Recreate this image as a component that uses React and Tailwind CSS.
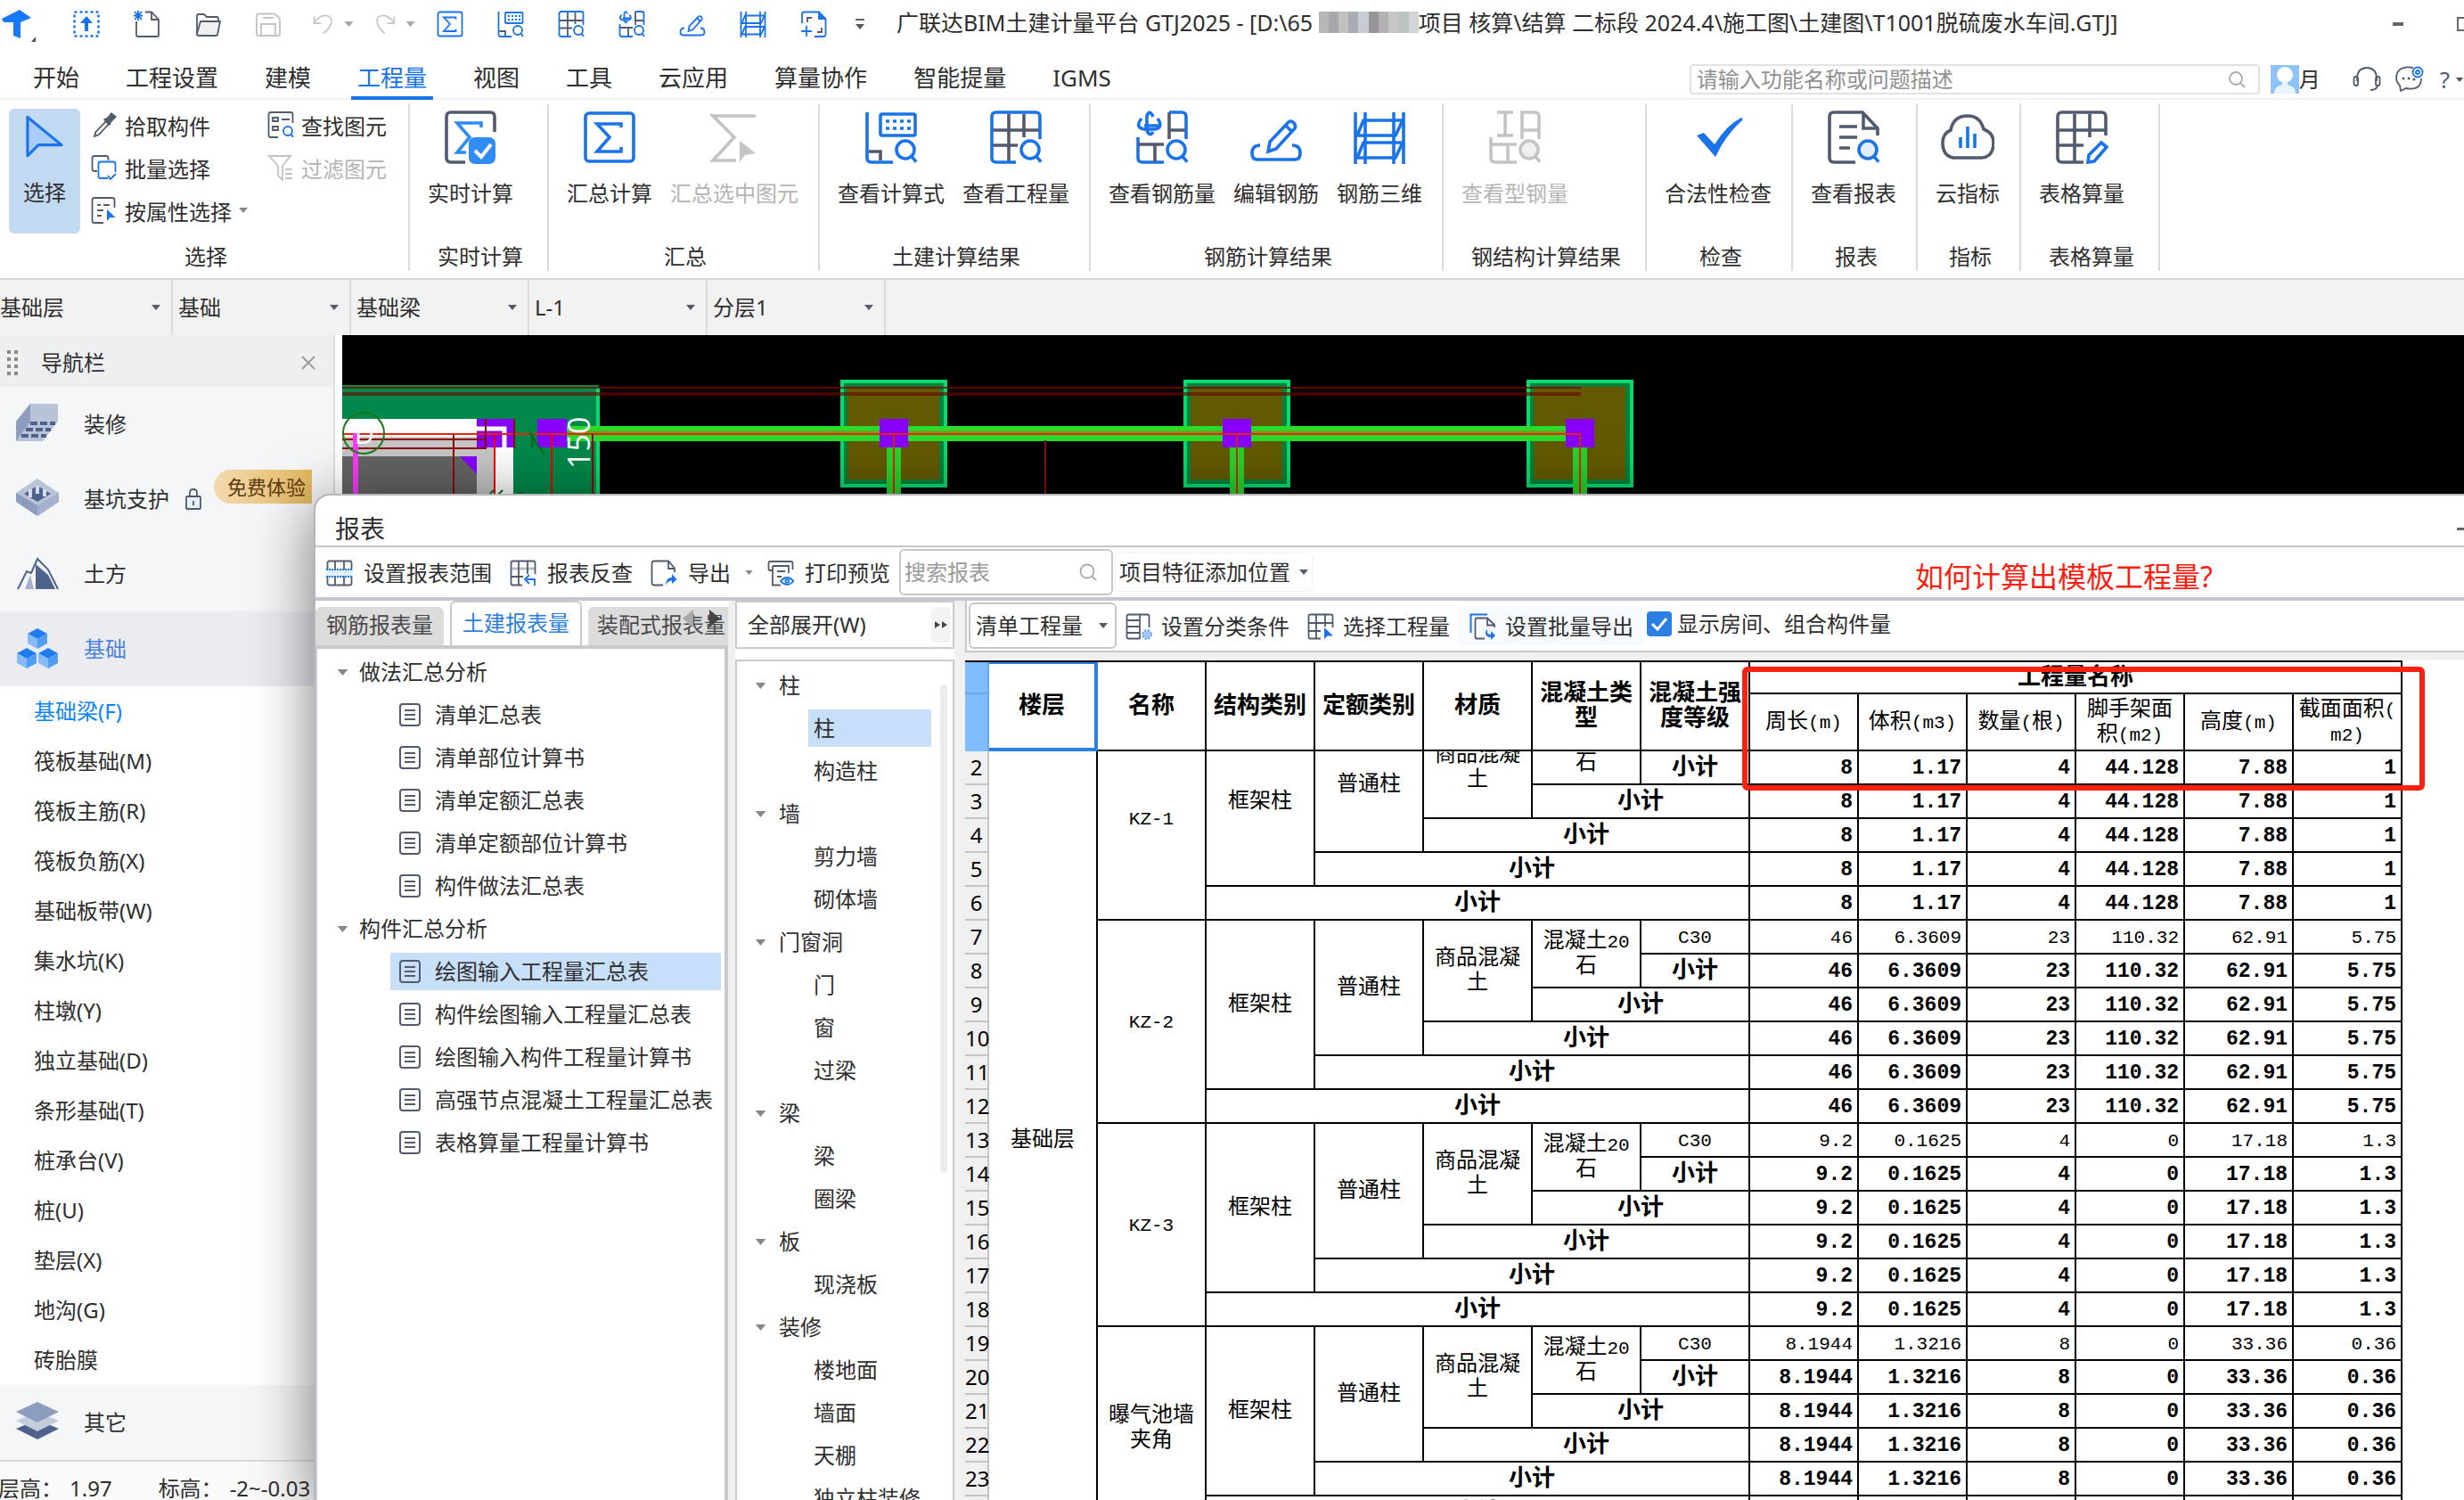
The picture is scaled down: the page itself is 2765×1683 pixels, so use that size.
import React from "react";

const B = "#1a73e8";
const D = "#525a6e";
const G = "#c4c4c4";

/* ---------- icons ---------- */

function Svg({ children, box = "0 0 30 30", className = "size-[30px]" }) {
  return (
    <svg viewBox={box} fill="none" strokeWidth="1.8" className={`shrink-0 ${className}`} aria-hidden="true">
      {children}
    </svg>
  );
}

function Lens({ color = B, x = 23, y = 22, fill = "none" }) {
  return (
    <g stroke={color}>
      <circle cx={x} cy={y} r="5" fill={fill} />
      <path d={`M${x + 3.5} ${y + 3.8}l2.6 3`} />
    </g>
  );
}

function Caret({ className = "h-[6px] w-[10px] text-[#555b66]" }) {
  return (
    <svg viewBox="0 0 10 6" className={`shrink-0 ${className}`} aria-hidden="true">
      <path d="M0 0h10L5 6z" fill="currentColor" />
    </svg>
  );
}

const icons = {
  sigma: (
    <g stroke={B}>
      <rect x="1.5" y="1.5" width="27" height="27" rx="2" />
      <path d="M21.500 9.500V7.500H8l7 7.500-7 8h13.500v-2.500" />
    </g>
  ),
  sigmaGray: (
    <g stroke={G}>
      <path d="M27 3H3l12 12L3 28h13" />
      <path d="M18 17v12l3-4 6-1z" fill={G} stroke="none" />
    </g>
  ),
  realtime: (
    <g>
      <path d="M12 29H4q-2.500 0-2.500-2.500V3.500Q1.500 1 4 1h22q2.500 0 2.500 2.500V12" stroke={D} />
      <path d="M21 9.500V7H7.500l7 8-7 8.500h5" stroke="#2f8cf5" />
      <rect x="14" y="15" width="15" height="15" rx="3.500" fill="#2f8cf5" />
      <path d="M17.500 22.500l3.500 3.500 5.500-7" stroke="#fff" strokeWidth="2" />
    </g>
  ),
  formula: (
    <g>
      <path d="M1.500 1v25.500q0 2.500 2.500 2.500h12" stroke={B} />
      <path d="M2.500 23h6.500v5" stroke={D} />
      <rect x="9" y="2" width="19.500" height="12" rx="1" stroke={B} />
      <path d="M12 6h14M12 10h14" stroke={B} strokeDasharray="2 2" />
      <Lens />
    </g>
  ),
  gridLens: (
    <g>
      <path d="M11 2v27M19.500 2v13M2 11h26M2 19.500h14" stroke={D} />
      <path d="M15 29H4q-2.500 0-2.500-2.500V3.500Q1.500 1 4 1h22q2.500 0 2.500 2.500V16" stroke={B} />
      <Lens />
    </g>
  ),
  rebar: (
    <g>
      <path d="M3.500 4.500q-4 5 1.500 6h6q5-1 1.500-6" stroke={B} />
      <path d="M5 8.500h8M10 3.500Q8 -1 6.500 3v8q1.500 4 3.500 1" stroke={B} />
      <path d="M19 1v15M19 11h9" stroke={D} />
      <path d="M19 1h7q2.500 0 2.500 2.500V16M1.500 15v11.500q0 2.500 2.500 2.500h12" stroke={B} />
      <path d="M2 19h14M11 19v10" stroke={D} />
      <Lens />
    </g>
  ),
  steel: (
    <g stroke={G}>
      <path d="M5 1h9M9.500 1v13M5 14h9M19 16V1h7q2.500 0 2.500 2.500V16M19 11h9M1.500 15v11.500q0 2.500 2.500 2.500h12M2 19h14M11 19v10" />
      <Lens color={G} fill="#f0f0f0" />
    </g>
  ),
  pen: (
    <g stroke={B}>
      <path d="M6 19.500q-4.500 0-4.500 4.500 0 3.500 3 3.500h21q3 0 3-3.500 0-4.500-4.500-4.500" />
      <path d="M10.500 23l1-5.500L22 6.500q1.500-1 3 .5 1.300 1.500.5 3L15 21.500z" />
      <path d="M20.500 8.500l3.500 3.500" />
    </g>
  ),
  ladder: (
    <g stroke={B}>
      <path d="M1.500 1v29M7 1v29M23 1v29M28.500 1v29" />
      <path d="M6 5.500h22L24 14H2.500zM6 18h22l-4 8.500H2.500z" />
    </g>
  ),
  frame: (
    <g>
      <path d="M2 14V4q0-2.500 2.500-2.500H21L28.500 9v17.500q0 2.500-2.500 2.500H16" stroke={B} />
      <path d="M21 2v7h7" fill={B} stroke={B} />
      <path d="M8 13V8h5M24 19v5h-5" stroke={D} />
      <path d="M1 23h12M7 17v12" stroke={B} />
    </g>
  ),
  upload: (
    <g>
      <rect x="1.500" y="1.500" width="27" height="27" stroke={B} strokeWidth="2.500" strokeDasharray="3 3" />
      <path d="M15 6l7 8h-5v9h-4v-9H8z" fill={B} />
    </g>
  ),
  newDoc: (
    <g>
      <path d="M3 12v15q0 2 2 2h21q2 0 2-2V10l-8-8.500h-7" stroke={D} />
      <path d="M20 2v8h8" stroke={D} />
      <path d="M1 1l8 9M9 1L1 10M5 0v11M0 5.500h10" stroke={B} />
    </g>
  ),
  folder: (
    <g stroke={D}>
      <path d="M3 27V6q0-2 2-2h6l3 3h11q2 0 2 2v3" />
      <path d="M7 12h22l-3 15q0 1-2 1H5q-2 0-2-2z" fill="#f0f0f0" />
    </g>
  ),
  save: (
    <g stroke={G}>
      <path d="M2 6q0-2.500 2.500-2.500H22l6 5V26q0 2-2 2H4q-2 0-2-2z" />
      <path d="M9 8h12M7 28V15h16v13" />
    </g>
  ),
  undo: (
    <g stroke={G}>
      <path d="M3 5v9h9M3 13Q11 3 19 4q8 2 6 10-3 8-10 13" />
    </g>
  ),
  redo: (
    <g stroke={G}>
      <path d="M27 5v9h-9M27 13Q19 3 11 4q-8 2-6 10 3 8 10 13" />
    </g>
  ),
  check: <path d="M3 14l4-1.500 6 6.500Q20 8 28 4q1 0 .5 1.500Q19 14 13.500 26z" fill={B} />,
  report: (
    <g>
      <path d="M16 29H4q-2.500 0-2.500-2.500V3.500Q1.500 1 4 1h16l8.500 9v4" stroke={D} />
      <path d="M20.500 2v8h7M7 9h10M7 15h10M7 21h6" stroke={D} />
      <Lens fill="#e2eeff" />
    </g>
  ),
  cloud: (
    <g>
      <path d="M7 26.500q-6-1-6-8.500 0-5 4.500-7 1.500-8 9.500-8 7 0 9 7.500 5.500 2 5.500 7.500 0 8-6.500 8.500z" stroke={D} />
      <path d="M11 15v6M15 9v12M19 13v8" stroke={B} />
    </g>
  ),
  gridPen: (
    <g>
      <path d="M16 29H4q-2.500 0-2.500-2.500V3.500Q1.500 1 4 1h22q2.500 0 2.500 2.500V14M11 2v27M19.500 2v13M2 11h26M2 19.500h14" stroke={D} />
      <path d="M18.500 29l.5-4 7-7 3 2.500-7 8z" stroke={B} />
    </g>
  ),
  cursor: <path d="M4 2v25l7-7h15z" fill="#a9cdf8" stroke={B} strokeLinejoin="round" />,
  dropper: (
    <g>
      <path d="M4 28l1.500-5L17 11l3 3L9 26z" stroke={D} />
      <path d="M15 8l3-1 5-6 6 5-6 6-1 3-2 1-6-7z" fill={D} />
    </g>
  ),
  copySel: (
    <g>
      <path d="M7 19H4q-2.500 0-2.500-2.500v-12Q1.500 2 4 2h13q2.500 0 2.500 2.500V7" stroke={D} />
      <path d="M19 27h-8q-2.500 0-2.500-2.500V11q0-2.500 2.500-2.500h14q2.500 0 2.500 2.500v9M19 24l3 4 6-6" stroke={B} />
    </g>
  ),
  attrSel: (
    <g>
      <path d="M14 29H4q-2.500 0-2.500-2.500V3.500Q1.500 1 4 1h20q2.500 0 2.500 2.500V12M7 9h4M14 9h7M7 15h7M7 21h5" stroke={D} />
      <path d="M18 14v13l3.500-4 6 0z" fill={B} />
    </g>
  ),
  findEl: (
    <g>
      <path d="M12 29H4q-2.500 0-2.500-2.500V3.500Q1.500 1 4 1h22q2.500 0 2.500 2.500V13M6 7h6v4H6zM6 17h6v4H6zM16 9h9" stroke={D} />
      <Lens />
    </g>
  ),
  filter: (
    <path d="M2 2h24l-9 11v16l-5-5V13zM20 17h8M20 22h8M20 27h8" stroke={G} />
  ),
  range: (
    <g>
      <rect x="1.500" y="1.500" width="27" height="27" rx="2" stroke={D} />
      <path d="M10 2v27M20 2v27" stroke={D} />
      <path d="M0 11h30v8H0z" fill="#e2efff" />
      <path d="M0 11h30M0 19h30" stroke={B} strokeDasharray="2 1" />
    </g>
  ),
  trace: (
    <g>
      <path d="M1 10h28" stroke="#b8bcc4" strokeWidth="3" />
      <path d="M14 28.500H3.500q-2 0-2-2v-23q0-2 2-2h23q2 0 2 2V16M10 2v27M20 2v14M2 19h13" stroke={D} />
      <path d="M28 29v-7h-9M22 17l-5 5 5 5" stroke={B} />
    </g>
  ),
  exportDoc: (
    <g>
      <path d="M14 28.500H4q-2.500 0-2.500-2.500V4q0-2.500 2.500-2.500h16l7 8V14M20 2v8h7" stroke={D} />
      <path d="M17 29q0-9 7-9v-4l5.500 6-5.500 5v-3.500q-5 0-7 5.500z" fill={B} />
    </g>
  ),
  print: (
    <g>
      <path d="M6 12H3.500q-2 0-2-2v-6q0-2 2-2h23q2 0 2 2v7M6 7h18v8M6 7v21.500h9M11 13h9M11 19h5" stroke={D} />
      <path d="M15 24q7-8 14.500 0-7.500 8-14.500 0z" fill="#e2efff" stroke={B} />
      <circle cx="22.300" cy="24" r="1.800" stroke={B} />
    </g>
  ),
  classify: (
    <g>
      <path d="M16 28.500H3.500q-2 0-2-2v-23q0-2 2-2h21q2 0 2 2V16M16 2v27M2 8h14M2 15h14M2 22h14" stroke={D} />
      <circle cx="24" cy="24" r="5" fill="#a5c8f8" />
      <circle cx="24" cy="24" r="5" stroke="#5f9cf0" strokeDasharray="2 2" />
    </g>
  ),
  gridCursor: (
    <g>
      <path d="M15 28.500H3.500q-2 0-2-2v-23q0-2 2-2h23q2 0 2 2V16M10 2v27M20 2v13M2 11h27M2 20h13" stroke={D} />
      <path d="M19 16v13l3.500-3.500H29z" fill={B} />
    </g>
  ),
  batch: (
    <g>
      <path d="M1.500 22V1.500H20" stroke={B} strokeWidth="2" />
      <path d="M17 28.500H8.500q-2 0-2-2v-19q0-2 2-2H20l8 7.500v3M20 6v7.500h8" stroke={D} />
      <path d="M20 18v3q0 3 4 3v-4l5 5-5 5v-3q-6 0-6-6z" fill={B} />
    </g>
  ),
};

function Icon({ name, className }) {
  return <Svg className={className}>{icons[name]}</Svg>;
}

/* ---------- shared controls ---------- */

function Pick({ label, value, className = "", arrow = "right-3" }) {
  return (
    <div className={`relative flex items-center ${className}`}>
      <select aria-label={label} defaultValue={value} className="size-full appearance-none bg-transparent pr-4 outline-none">
        <option>{value}</option>
      </select>
      <span className={`pointer-events-none absolute top-1/2 -translate-y-1/2 ${arrow}`}>
        <Caret />
      </span>
    </div>
  );
}

/* ---------- title bar ---------- */

const mosaic = ["bg-[#b9b6b6]", "bg-[#aaa7ac]", "bg-[#c3c0bf]", "bg-[#a9adb3]", "bg-[#c8cbd0]", "bg-[#9a959b]", "bg-[#b3b0b4]", "bg-[#c6c6c9]", "bg-[#bcc4c3]", "bg-[#d2d4d6]"];

function TitleBar() {
  const quick = ["sigma", "formula", "gridLens", "rebar", "pen", "ladder", "frame"];
  return (
    <header className="flex h-[54px] items-center">
      <svg viewBox="0 0 40 40" className="size-10 shrink-0" aria-hidden="true">
        <path d="M2 14L22 4l13 9-12 5v18l-8-3V18H4z" fill="#1677ff" />
        <path d="M40 34v6h-5z" fill="#555" />
      </svg>
      <div className="ml-[42px] flex items-center gap-[38px]">
        {["upload", "newDoc", "folder", "save"].map((n) => (
          <button key={n} type="button" aria-label={n}><Icon name={n} className="block size-[30px]" /></button>
        ))}
      </div>
      <div className="ml-[34px] flex items-center gap-[22px]">
        {["undo", "redo"].map((n) => (
          <button key={n} type="button" aria-label={n} className="flex items-center gap-[10px]">
            <Icon name={n} className="size-[26px]" />
            <Caret className="h-[6px] w-[11px] text-[#a8a8a8]" />
          </button>
        ))}
      </div>
      <div className="ml-6 flex items-center gap-[38px]">
        {quick.map((n) => (
          <button key={n} type="button" aria-label={n}><Icon name={n} className="block size-[30px]" /></button>
        ))}
      </div>
      <button type="button" aria-label="自定义" className="ml-8 flex flex-col items-center gap-1">
        <span className="h-[2px] w-[10px] bg-[#666]" />
        <Caret className="h-[6px] w-[10px] text-[#555]" />
      </button>
      <h1 className="ml-9 flex items-center pb-1 text-[25px] whitespace-pre">
        广联达BIM土建计量平台 GTJ2025 - [D:\65{" "}
        <span className="flex h-6 w-[112px]">
          {mosaic.map((c) => (
            <span key={c} className={`h-full flex-1 ${c}`} />
          ))}
        </span>
        项目 核算\结算 二标段 2024.4\施工图\土建图\T1001脱硫废水车间.GTJ]
      </h1>
      <div className="ml-auto flex items-center gap-[60px]">
        <button type="button" aria-label="最小化" className="h-1 w-3 bg-[#666]" />
        <button type="button" aria-label="最大化" className="-mr-1 h-4 w-3 border-2 border-r-0 border-[#666]" />
      </div>
    </header>
  );
}

/* ---------- menu tabs ---------- */

const menu = ["开始", "工程设置", "建模", "工程量", "视图", "工具", "云应用", "算量协作", "智能提量", "IGMS"];

function MenuBar() {
  return (
    <nav className="flex h-[58px] items-center border-b-2 border-[#f2f2f2] pl-[30px] text-[26px]">
      <div className="flex h-full gap-[38px]">
        {menu.map((m) => (
          <button
            key={m}
            type="button"
            className={m === "工程量" ? "-mb-[2px] border-b-4 border-[#1a73e8] px-[7px] pt-3 text-[#1a73e8]" : "px-[7px] pt-[10px]"}
          >
            {m}
          </button>
        ))}
      </div>
      <div className="ml-auto flex items-center pt-[14px]">
        <label className="flex h-[34px] w-[640px] items-center rounded-sm border-2 border-[#e2e2e2] px-[6px] text-[24px]">
          <input aria-label="搜索功能" placeholder="请输入功能名称或问题描述" className="min-w-0 flex-1 outline-none placeholder:text-[#909090]" />
          <Svg box="0 0 20 20" className="mr-2 size-[20px]">
            <circle cx="9" cy="9" r="7" stroke="#aaa" />
            <path d="M14 14l5 5" stroke="#aaa" />
          </Svg>
        </label>
        <svg viewBox="0 0 32 32" className="ml-3 size-8 shrink-0" aria-hidden="true">
          <path d="M0 0h32v32H0z" fill="#8fc2f8" />
          <circle cx="16" cy="11" r="9" fill="#fff" />
          <path d="M13 18h6v4q9 2 9 10H4q0-8 9-10z" fill="#eaf4ff" />
        </svg>
        <span className="text-[24px]">月</span>
        <button type="button" aria-label="客服" className="ml-9">
          <Svg box="0 0 32 32" className="block size-8">
            <path d="M5 18V14q1-11 11-11t11 11v4" stroke={D} />
            <rect x="1.500" y="13" width="4.500" height="10" rx="2" stroke={D} />
            <rect x="26" y="13" width="4.500" height="10" rx="2" stroke={D} />
            <path d="M28 23q-1 5-8 5" stroke={D} />
          </Svg>
        </button>
        <button type="button" aria-label="消息" className="ml-4">
          <Svg box="0 0 32 32" className="block size-8">
            <path d="M20 3Q2 0 1 14q0 5 4 9l1 6 6-3q17 3 17-11" stroke={D} />
            <circle cx="9" cy="15" r="1.500" fill={D} /><circle cx="15" cy="15" r="1.500" fill={D} /><circle cx="21" cy="16" r="1.500" fill={D} />
            <circle cx="25" cy="8" r="5.500" stroke={B} /><circle cx="25" cy="8" r="2" stroke={B} />
          </Svg>
        </button>
        <button type="button" aria-label="帮助" className="ml-[18px] flex items-center gap-[6px] text-[26px] text-[#525a6e]">
          ?<Caret className="h-[5px] w-[10px] text-[#555]" />
        </button>
      </div>
    </nav>
  );
}

/* ---------- ribbon ---------- */

const ribbon = [
  { label: "实时计算", width: "w-[156px]", items: [["realtime", "实时计算"]] },
  { label: "汇总", width: "w-[304px]", items: [["sigma", "汇总计算"], ["sigmaGray", "汇总选中图元", true]] },
  { label: "土建计算结果", width: "w-[304px]", items: [["formula", "查看计算式"], ["gridLens", "查看工程量"]] },
  { label: "钢筋计算结果", width: "w-[396px]", items: [["rebar", "查看钢筋量"], ["pen", "编辑钢筋"], ["ladder", "钢筋三维"]] },
  { label: "钢结构计算结果", width: "w-[228px]", items: [["steel", "查看型钢量", true]] },
  { label: "检查", width: "w-[164px]", items: [["check", "合法性检查"]] },
  { label: "报表", width: "w-[140px]", items: [["report", "查看报表"]] },
  { label: "指标", width: "w-[116px]", items: [["cloud", "云指标"]] },
  { label: "表格算量", width: "w-[156px]", items: [["gridPen", "表格算量"]] },
];

function SmallTool({ icon, label, off, caret }) {
  return (
    <button type="button" disabled={off} className={`flex h-12 items-center gap-2 ${off ? "text-[#b4b4b4]" : ""}`}>
      <Icon name={icon} className="size-[30px]" />
      <span className="pt-[3px]">{label}</span>
      {caret && <Caret className="h-[6px] w-[10px] text-[#888]" />}
    </button>
  );
}

function Ribbon() {
  return (
    <section className="flex h-[202px] border-b-2 border-[#d6d6d6] py-1">
      <div className="mb-1 flex w-[460px] flex-col border-r-2 border-[#dcdcdc]">
        <div className="flex flex-1 pl-[10px]">
          <button type="button" className="mt-[6px] flex h-[140px] w-20 flex-col items-center rounded-md bg-[#c2d9f2] pt-[6px]">
            <Icon name="cursor" className="size-[52px]" />
            <span className="mt-5 leading-8">选择</span>
          </button>
          <div className="ml-3">
            <SmallTool icon="dropper" label="拾取构件" />
            <SmallTool icon="copySel" label="批量选择" />
            <SmallTool icon="attrSel" label="按属性选择" caret />
          </div>
          <div className="ml-[22px]">
            <SmallTool icon="findEl" label="查找图元" />
            <SmallTool icon="filter" label="过滤图元" off />
          </div>
        </div>
        <div className="pl-1 text-center leading-8">选择</div>
      </div>
      {ribbon.map((g) => (
        <div key={g.label} className={`mb-1 flex flex-col border-r-2 border-[#dcdcdc] ${g.width}`}>
          <div className="flex flex-1 pl-[10px]">
            {g.items.map(([icon, label, off]) => (
              <button
                key={label}
                type="button"
                disabled={off}
                className={`flex flex-col items-center px-[10px] pt-2 whitespace-nowrap ${off ? "text-[#b4b4b4]" : ""}`}
              >
                <Icon name={icon} className="size-[60px]" />
                <span className="mt-[17px] leading-8">{label}</span>
              </button>
            ))}
          </div>
          <div className="pl-1 text-center leading-8">{g.label}</div>
        </div>
      ))}
    </section>
  );
}

function FilterStrip() {
  const list = [["楼层", "基础层", "w-[194px] pl-0"], ["类别", "基础", "w-[200px] pl-[6px]"], ["构件类型", "基础梁", "w-[200px] pl-[6px]"], ["构件", "L-1", "w-[200px] pl-[6px]"], ["分层", "分层1", "w-[200px] pl-[6px]"]];
  return (
    <div className="flex h-[62px] bg-[#f2f2f2]">
      {list.map(([l, v, w]) => (
        <Pick key={l} label={l} value={v} className={`border-r-2 border-[#dcdcdc] ${w}`} />
      ))}
    </div>
  );
}

/* ---------- navigation panel ---------- */

const navIcons = {
  deco: (
    <g>
      <path d="M0 20L16 0h31v20L30 42H0z" fill="#b9c3d8" />
      <path d="M0 20L16 0v20L0 42z" fill="#8d9dbf" />
      <path d="M16 22h28M11 29h28M6 36h28" stroke="#4e628c" strokeWidth="4" strokeDasharray="8 3" />
    </g>
  ),
  pit: (
    <g>
      <path d="M24 0l24 16v10L24 42 0 26V16z" fill="#b9c3d8" />
      <path d="M0 16l24 14v12L0 26z" fill="#8d9dbf" />
      <path d="M24 30l24-14v10L24 42z" fill="#a5b1cc" />
      <path d="M24 8l15 9-15 9-15-9z" fill="#4e628c" />
      <path d="M16 12v9M24 8v9M32 12v8" stroke="#d5dcea" strokeWidth="4" />
    </g>
  ),
  earth: (
    <g>
      <path d="M2 40L12 20l5 2L24 6l12 12 11 22" stroke="#4e628c" strokeWidth="2" />
      <path d="M10 40l6-16 4 16z" fill="#a5b1cc" />
      <path d="M22 40V12l14 12 8 16z" fill="#4e628c" />
    </g>
  ),
  base: (
    <g>
      {[[24, 0], [12, 22], [36, 22]].map(([x, y]) => (
        <g key={x}>
          <path d={`M${x} ${y}l11 6-11 6-11-6z`} fill="#1e7bf0" />
          <path d={`M${x - 11} ${y + 6}l11 6v11l-11-6z`} fill="#86baf8" />
          <path d={`M${x + 11} ${y + 6}l-11 6v11l11-6z`} fill="#4f9df5" />
        </g>
      ))}
    </g>
  ),
  other: (
    <g>
      <path d="M24 20l24 10-24 12L0 30z" fill="#4e628c" />
      <path d="M24 11l24 10-24 12L0 21z" fill="#c5cddd" />
      <path d="M24 0l24 11-24 12L0 11z" fill="#8d9dbf" />
    </g>
  ),
};

function NavItem({ icon, label, active, children }) {
  return (
    <button
      type="button"
      className={`flex h-[84px] w-full items-center pl-[18px] ${active ? "bg-[#ebecf0] text-[#4a7fe0]" : "bg-[#f5f6f8]"}`}
    >
      <Svg box="0 0 48 46" className="h-[46px] w-12">{navIcons[icon]}</Svg>
      <span className="ml-7">{label}</span>
      {children}
    </button>
  );
}

const baseItems = ["基础梁(F)", "筏板基础(M)", "筏板主筋(R)", "筏板负筋(X)", "基础板带(W)", "集水坑(K)", "柱墩(Y)", "独立基础(D)", "条形基础(T)", "桩承台(V)", "桩(U)", "垫层(X)", "地沟(G)", "砖胎膜"];

function NavPanel() {
  return (
    <aside className="flex w-[376px] shrink-0 flex-col border-r-2 border-[#dcdcdc]">
      <div className="flex h-[58px] items-center bg-[#eeeff1] pt-1 pr-5 pl-2">
        <span className="grid grid-cols-2 gap-1">
          {Array.from({ length: 8 }, (_, i) => (
            <span key={i} className="size-1 bg-[#8a8a8a]" />
          ))}
        </span>
        <h2 className="ml-[26px]">导航栏</h2>
        <button type="button" aria-label="关闭" className="ml-auto">
          <Svg box="0 0 16 16" className="block size-4"><path d="M1 1l14 14M15 1L1 15" stroke="#999" /></Svg>
        </button>
      </div>
      <NavItem icon="deco" label="装修" />
      <NavItem icon="pit" label="基坑支护">
        <Svg box="0 0 18 24" className="ml-[18px] h-6 w-[18px]">
          <rect x="1" y="9" width="16" height="14" rx="1" stroke={D} fill="#e6f0fb" />
          <path d="M5 9V5q0-4 4-4t4 4v4M9 14v5" stroke={D} />
        </Svg>
        <span className="mb-7 ml-[14px] flex h-[38px] w-[110px] items-center justify-center rounded-l-full bg-linear-to-r from-[#f3dbae] to-[#e3b85f] pl-2 text-[22px] text-[#5e3a0e]">
          免费体验
        </span>
      </NavItem>
      <NavItem icon="earth" label="土方" />
      <NavItem icon="base" label="基础" active />
      <ul className="bg-white">
        {baseItems.map((t, i) => (
          <li key={t}>
            <button type="button" className={`h-14 w-full pl-[38px] text-left ${i === 0 ? "text-[#0d84f5]" : ""}`}>{t}</button>
          </li>
        ))}
      </ul>
      <NavItem icon="other" label="其它" />
      <footer className="flex flex-1 overflow-hidden border-t-2 border-[#dcdcdc] bg-[#fafafa] leading-[60px] whitespace-nowrap">
        <span className="-ml-[2px]">层高：</span>
        <span className="ml-2">1.97</span>
        <span className="ml-[52px]">标高：</span>
        <span className="ml-2">-2~-0.03</span>
      </footer>
    </aside>
  );
}

/* ---------- drawing canvas ---------- */

function Footing({ x }) {
  return (
    <g>
      <rect x={x + 1} y="428" width="116" height="117" fill="#00823e" stroke="#00dc6c" strokeWidth="4" />
      <rect x={x + 7} y="434" width="103" height="104" fill="#625a00" />
    </g>
  );
}

function Canvas() {
  const xs = [944, 1329, 1714];
  return (
    <div className="ml-2 min-w-0 flex-1 overflow-hidden bg-black">
      <svg viewBox="384 376 2381 180" className="h-[180px] w-[2381px] max-w-none">
        <rect x="384" y="432" width="288" height="124" fill="#00884a" />
        <path d="M671 436v120" stroke="#00e070" strokeWidth="4" />
        {xs.map((x) => <Footing key={x} x={x} />)}
        <path d="M384 435h1390" stroke="#7a0a00" strokeWidth="2" opacity=".8" />
        <path d="M384 442h1390" stroke="#6a0a00" strokeWidth="4" opacity=".65" />
        <rect x="384" y="470" width="192" height="86" fill="#fff" />
        <rect x="384" y="490" width="172" height="66" fill="#c6c6c6" />
        <rect x="384" y="512" width="151" height="44" fill="#646464" />
        <path d="M516 512h19v20z" fill="#8800ff" />
        <rect x="535" y="470" width="42" height="32" fill="#8800ff" />
        <path d="M535 481h31v75" stroke="#fff" strokeWidth="5" fill="none" />
        <rect x="603" y="470" width="33" height="32" fill="#8800ff" />
        <rect x="636" y="478" width="1150" height="17" fill="#2bdb2b" />
        <path d="M636 485h1150" stroke="#7a9a1a" strokeWidth="3" />
        {xs.map((x) => (
          <g key={x}>
            <rect x={x + 51} y="500" width="16" height="56" fill="#2bd02b" />
            <rect x={x + 43} y="470" width="32" height="32" fill="#8800ff" />
            <path d={`M${x + 59} 487v69`} stroke="#c03010" strokeWidth="2" />
          </g>
        ))}
        <path d="M384 487h1390" stroke="#f02010" strokeWidth="2" />
        <path d="M384 493h162M384 503h162M545 470v33M577 470v33M509 487v69M1173 494v62M665 487v69" stroke="#8a0a0a" strokeWidth="2" fill="none" />
        <path d="M555 487v69M619 487v69" stroke="#f00000" strokeWidth="2" />
        <path d="M399 486v70" stroke="#f53cf5" strokeWidth="6" />
        <circle cx="408" cy="486" r="23" fill="none" stroke="#1a7a1a" strokeWidth="2" />
        <path d="M593 484l18 26M597 502v-16M548 556l6-6M558 556l6-6M580 556l6-4" stroke="#0a6a1a" strokeWidth="2" fill="none" />
        <text x="398" y="498" fill="#fff" fontSize="30" fontFamily="Open Sans, sans-serif">D</text>
        <text transform="translate(662 526) rotate(-90)" fill="#fff" fontSize="34" fontFamily="Open Sans, sans-serif">150</text>
      </svg>
    </div>
  );
}

/* ---------- report dialog ---------- */

function TextTool({ icon, label, className = "gap-[10px]" }) {
  return (
    <button type="button" className={`flex items-center whitespace-nowrap ${className}`}>
      <Icon name={icon} className="size-[30px]" />
      {label}
    </button>
  );
}

function DialogToolbar() {
  return (
    <div className="flex h-[60px] items-center border-b-4 border-[#c4c7ce] pl-3">
      <TextTool icon="range" label="设置报表范围" className="gap-3 pt-[2px]" />
      <TextTool icon="trace" label="报表反查" className="ml-5 gap-3 pt-[2px]" />
      <TextTool icon="exportDoc" label="导出" className="ml-5 gap-3 pt-[2px]" />
      <button type="button" aria-label="导出选项" className="ml-4"><Caret className="h-[5px] w-[9px] text-[#888]" /></button>
      <TextTool icon="print" label="打印预览" className="ml-4 gap-3 pt-[2px]" />
      <label className="ml-[10px] flex h-[52px] w-[240px] items-center rounded-md border-2 border-[#c8c8c8] pr-4 pl-1">
        <input aria-label="搜索报表" placeholder="搜索报表" className="min-w-0 flex-1 outline-none placeholder:text-[#9a9a9a]" />
        <Svg box="0 0 20 20" className="size-[20px]">
          <circle cx="9" cy="9" r="7.500" stroke="#aaa" />
          <path d="M14 14l5 5" stroke="#aaa" />
        </Svg>
      </label>
      <Pick label="项目特征添加位置" value="项目特征添加位置" className="ml-[2px] h-11 w-[222px] rounded-md border border-[#f0f0f0] pl-1" arrow="right-1" />
      <p className="mt-[10px] ml-[676px] text-[32px] whitespace-nowrap text-[#fa1e0f]">如何计算出模板工程量?</p>
    </div>
  );
}

const tree = [
  ["做法汇总分析", ["清单汇总表", "清单部位计算书", "清单定额汇总表", "清单定额部位计算书", "构件做法汇总表"]],
  ["构件汇总分析", ["绘图输入工程量汇总表", "构件绘图输入工程量汇总表", "绘图输入构件工程量计算书", "高强节点混凝土工程量汇总表", "表格算量工程量计算书"]],
];

function ReportTree() {
  return (
    <div className="flex w-[463px] shrink-0 flex-col">
      <div role="tablist" className="flex h-[54px] items-end gap-[7px] overflow-hidden border-b-4 border-[#c8cacf] whitespace-nowrap text-[#4a4a4a]">
        <button type="button" role="tab" className="h-[43px] rounded-t-md bg-[#dcdcdc] px-3 pb-[3px]">钢筋报表量</button>
        <button type="button" role="tab" aria-selected="true" className="-mb-1 h-[54px] rounded-t-md border-2 border-b-0 border-[#c8cacf] bg-white px-3 pb-[6px] text-[#2b7fe0]">
          土建报表量
        </button>
        <div className="relative h-[43px] shrink-0">
          <button type="button" role="tab" className="h-[43px] rounded-tl-md bg-[#dcdcdc] px-[10px] pb-[3px]">装配式报表量</button>
          <span className="absolute top-[3px] left-[106px] flex gap-[18px]">
            <svg viewBox="0 0 12 20" className="h-5 w-3" aria-hidden="true"><path d="M12 0v20L0 10z" fill="#a8a8a8" /></svg>
            <svg viewBox="0 0 12 20" className="h-5 w-3" aria-hidden="true"><path d="M0 0v20l12-10z" fill="#444" /></svg>
          </span>
        </div>
      </div>
      <div className="min-h-0 flex-1 overflow-hidden border-r-4 border-l-2 border-[#c8cacf] pt-[2px]">
        {tree.map(([head, items]) => (
          <div key={head}>
            <button type="button" className="flex h-12 items-center gap-3 pl-[22px]">
              <Caret className="h-[7px] w-[13px] text-[#888]" />
              {head}
            </button>
            {items.map((t) => (
              <div key={t} className="flex h-12 items-center pl-[82px]">
                <button
                  type="button"
                  className={`mr-1 flex h-[42px] flex-1 items-center gap-4 pl-[10px] whitespace-nowrap ${t === "绘图输入工程量汇总表" ? "bg-[#c8dffa]" : ""}`}
                >
                  <Svg box="0 0 24 26" className="h-[26px] w-6">
                    <rect x="1" y="1" width="22" height="24" rx="3" stroke={D} strokeWidth="2" />
                    <path d="M6 8h12M6 13h12M6 18h12" stroke={D} strokeWidth="2" />
                  </Svg>
                  {t}
                </button>
              </div>
            ))}
          </div>
        ))}
      </div>
    </div>
  );
}

const parts = [
  ["柱", ["柱", "构造柱"]],
  ["墙", ["剪力墙", "砌体墙"]],
  ["门窗洞", ["门", "窗", "过梁"]],
  ["梁", ["梁", "圈梁"]],
  ["板", ["现浇板"]],
  ["装修", ["楼地面", "墙面", "天棚", "独立柱装修"]],
];

function PartTree() {
  return (
    <div className="ml-2 flex w-[246px] shrink-0 flex-col bg-white">
      <div className="flex h-[54px] items-center border-2 border-[#c8cacf] pr-[2px] pl-3">
        <button type="button">全部展开(W)</button>
        <button type="button" aria-label="更多" className="ml-auto flex h-10 w-[22px] items-center justify-center rounded-md bg-[#f3f3f3]">
          <svg viewBox="0 0 14 8" className="h-2 w-[14px]" aria-hidden="true"><path d="M0 0l6 4-6 4zM8 0l6 4-6 4z" fill="#444" /></svg>
        </button>
      </div>
      <div className="mt-[12px] flex min-h-0 flex-1 overflow-hidden border-2 border-b-0 border-[#c8cacf]">
        <div className="flex-1 pt-[3px]">
          {parts.map(([head, items]) => (
            <div key={head}>
              <button type="button" className="flex h-12 items-center gap-[14px] pl-5">
                <Caret className="h-[7px] w-[13px] text-[#888]" />
                {head}
              </button>
              {items.map((t, i) => (
                <div key={t} className="flex h-12 items-center pl-20">
                  <button type="button" className={`h-[42px] w-[138px] pl-[6px] text-left ${head === "柱" && i === 0 ? "bg-[#c8dffa]" : ""}`}>{t}</button>
                </div>
              ))}
            </div>
          ))}
        </div>
        <div className="mt-[26px] mr-[6px] h-[548px] w-2 rounded-full bg-[#ececec]" />
      </div>
    </div>
  );
}

/* ---------- quantity sheet ---------- */

/* Latin runs are set in a half-width face beside full-width characters. */
function Mixed({ text, bold }) {
  return text.split(/([\x21-\x7e]+)/).map((s, i) =>
    i % 2 ? (
      <span key={i} className={bold ? "font-['Liberation_Mono',monospace] text-[23px] leading-none" : "font-['Liberation_Mono',monospace] text-[21px] leading-none"}>{s}</span>
    ) : (
      s
    )
  );
}

function Cell({ text, bold, right, head, className = "", ...span }) {
  const Tag = head ? "th" : "td";
  return (
    <Tag
      {...span}
      className={`border-r-2 border-b-2 border-black p-0 pb-1 whitespace-pre-line ${bold ? "text-[26px] leading-[28px] font-bold" : "text-[24px] leading-[28px] font-normal"} ${right ? "pr-[5px] text-right" : "text-center"} ${className}`}
    >
      <Mixed text={text} bold={bold} />
    </Tag>
  );
}

const groups = [
  ["KZ-1", ["8", "1.17", "4", "44.128", "7.88", "1"]],
  ["KZ-2", ["46", "6.3609", "23", "110.32", "62.91", "5.75"]],
  ["KZ-3", ["9.2", "0.1625", "4", "0", "17.18", "1.3"]],
  ["曝气池墙\n夹角", ["8.1944", "1.3216", "8", "0", "33.36", "0.36"]],
];

function Cols() {
  return (
    <colgroup>
      <col className="w-[27px]" />
      {Array.from({ length: 13 }, (_, i) => <col key={i} className="w-[122px]" />)}
    </colgroup>
  );
}

const RowNo = ({ n }) => (
  <th className="border-r-2 border-b-2 border-[#c4c4c4] bg-[#f0f0f0] p-0 text-center text-[24px] leading-[30px] font-normal">{n}</th>
);

function Sheet() {
  const heads = ["名称", "结构类别", "定额类别", "材质", "混凝土类\n型", "混凝土强\n度等级"];
  const metrics = ["周长(m)", "体积(m3)", "数量(根)", "脚手架面\n积(m2)", "高度(m)", "截面面积(\nm2)"];
  return (
    <div className="relative min-h-0 flex-1 overflow-hidden bg-white text-black">
      <table className="w-[1613px] table-fixed border-separate border-spacing-0 border-t-2 border-black">
        <Cols />
        <thead>
          <tr className="h-[36px]">
            <th className="border-r-2 border-b-2 border-[#6aa8ec] bg-[#80bbfb] p-0" />
            <Cell head bold rowSpan={2} text="楼层" className="border-t-2 border-r-4 border-b-4 !border-[#2b7fe0]" />
            {heads.map((h) => <Cell key={h} head bold rowSpan={2} text={h} />)}
            <Cell head bold colSpan={6} text="工程量名称" />
          </tr>
          <tr className="h-[64px]">
            <th className="border-r-2 border-[#6aa8ec] bg-[#80bbfb] p-0" />
            {metrics.map((m) => <Cell key={m} head text={m} />)}
          </tr>
        </thead>
      </table>
      <div className="overflow-hidden">
        <table className="-mt-[38px] w-[1613px] table-fixed border-separate border-spacing-0">
          <Cols />
          <tbody>
            {groups.flatMap(([name, values], g) =>
              Array.from({ length: 6 }, (_, r) => (
                <tr key={name + r} className="h-[38px]">
                  <RowNo n={g * 6 + r + 1} />
                  {g === 0 && r === 0 && <Cell rowSpan={25} text="基础层" />}
                  {r === 0 && (
                    <>
                      <Cell rowSpan={6} text={name} />
                      <Cell rowSpan={5} text="框架柱" />
                      <Cell rowSpan={4} text="普通柱" />
                      <Cell rowSpan={3} text={"商品混凝\n土"} />
                      <Cell rowSpan={2} text={"混凝土20\n石"} />
                    </>
                  )}
                  <Cell colSpan={r === 0 ? 1 : r} bold={r > 0} text={r === 0 ? "C30" : "小计"} />
                  {values.map((v, i) => <Cell key={i} right bold={r > 0} text={v} />)}
                </tr>
              ))
            )}
            <tr className="h-[38px]">
              <RowNo n={25} />
              <Cell colSpan={6} bold text="小计" />
              {["71.3944", "9.0156", "39", "154.448", "121.33", "8.41"].map((v) => <Cell key={v} right bold text={v} />)}
            </tr>
          </tbody>
        </table>
      </div>
      <div className="pointer-events-none absolute top-[7px] left-[872px] h-[139px] w-[766px] rounded-md border-[6px] border-[#fc2010]" />
    </div>
  );
}

function QuantityPane() {
  return (
    <div className="ml-3 flex min-w-0 flex-1 flex-col">
      <div className="flex h-[58px] shrink-0 items-center border-b-2 border-l-2 border-[#c4c7ce] bg-white pl-[2px]">
        <Pick label="工程量类型" value="清单工程量" className="h-[52px] w-[166px] rounded-md border-2 border-[#c8c8c8] pl-[6px]" arrow="right-2" />
        <TextTool icon="classify" label="设置分类条件" className="ml-[10px] gap-[10px] pt-[2px]" />
        <TextTool icon="gridCursor" label="选择工程量" className="ml-5 gap-[10px] pt-[2px]" />
        <TextTool icon="batch" label="设置批量导出" className="ml-[10px] h-11 gap-[10px] rounded-md bg-[#f6faff] px-3 pt-[2px]" />
        <label className="flex items-center gap-[6px] pb-1 whitespace-nowrap">
          <span className="relative ml-[3px] size-7">
            <input type="checkbox" defaultChecked className="block size-7 appearance-none rounded-sm bg-[#2b7fe0]" />
            <Svg box="0 0 28 28" className="pointer-events-none absolute inset-0 size-7"><path d="M6 14l6 6L22 8" stroke="#fff" strokeWidth="3" /></Svg>
          </span>
          显示房间、组合构件量
        </label>
      </div>
      <div className="h-[9px] shrink-0" />
      <Sheet />
    </div>
  );
}

function ReportDialog() {
  return (
    <section aria-label="报表" className="absolute top-[180px] right-0 bottom-0 left-[354px] flex flex-col overflow-hidden rounded-tl-2xl bg-white shadow-[0_10px_70px_rgba(0,0,0,0.55)] ring-2 ring-[#b4b6ba]">
      <div className="flex h-[58px] shrink-0 items-center border-b-2 border-[#c4c7ce] pt-[18px] pl-[22px] text-[28px]">
        <h2>报表</h2>
        <button type="button" aria-label="最小化" className="ml-auto h-[3px] w-2 bg-[#666]" />
      </div>
      <DialogToolbar />
      <div className="flex min-h-0 flex-1 bg-[#f0f0f0]">
        <div className="flex bg-white"><ReportTree /></div>
        <PartTree />
        <QuantityPane />
      </div>
    </section>
  );
}

export default function App() {
  return (
    <div className="flex h-screen flex-col overflow-hidden bg-white font-['Noto_Sans','Noto_Sans_CJK_SC',sans-serif] text-[24px] leading-[36px] text-[#2e2e2e]">
      <TitleBar />
      <MenuBar />
      <Ribbon />
      <FilterStrip />
      <main className="relative flex min-h-0 flex-1 overflow-hidden">
        <NavPanel />
        <Canvas />
        <ReportDialog />
      </main>
    </div>
  );
}
